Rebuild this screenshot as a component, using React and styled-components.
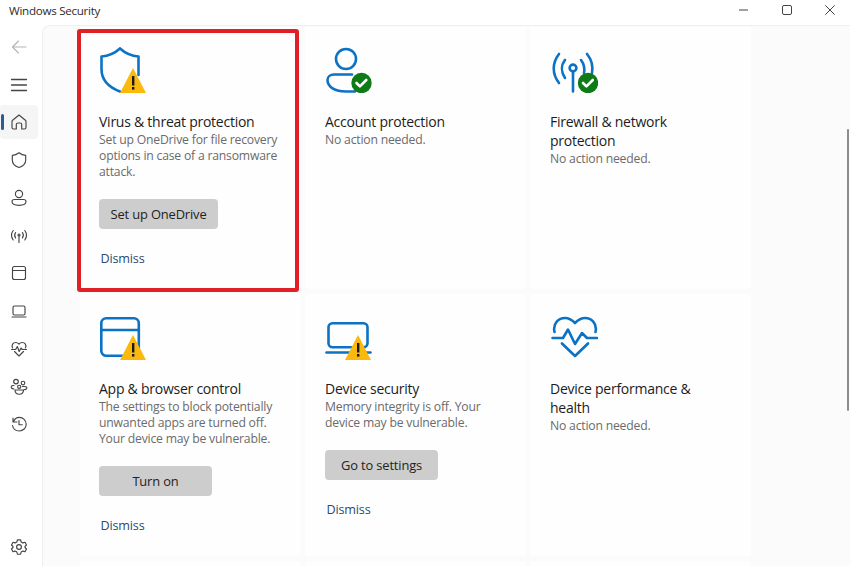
import React from "react";
import styled, { createGlobalStyle } from "styled-components";

const Global = createGlobalStyle`
  html, body { margin: 0; padding: 0; height: 100%; background: #fff; overflow: hidden; }
  #root { height: 100%; }
`;

const Window = styled.div`
  width: 850px; height: 566px; display: flex; flex-direction: column; position: relative; overflow: hidden;
  background: #fff; font-family: "Open Sans", "Noto Sans", sans-serif; color: #1c1c1c;
`;
const TitleBar = styled.header`
  height: 25px; flex: none; display: flex; align-items: center; padding-left: 9px; box-sizing: border-box;
`;
const AppName = styled.span`
  font-size: 11.6px; letter-spacing: -0.27px; color: #2b2b2b; flex: 1; margin-top: -5px;
`;
const Controls = styled.div`
  display: flex; gap: 33px; padding-right: 15px; margin-top: -6px;
`;
const ControlIcon = styled.svg`
  width: 10px; height: 10px; display: block; fill: none; stroke: #444; stroke-width: 1;
`;
const Body = styled.div`
  flex: 1; display: flex; min-height: 0;
`;
const Sidebar = styled.nav`
  width: 42px; flex: none; display: flex; flex-direction: column; padding-top: 4.85px; box-sizing: border-box;
`;
const NavItem = styled.div`
  width: 38px; height: 34px; flex: none; margin-bottom: ${p => (p.$bottom ? "2px" : "3.75px")}; position: relative; display: flex; align-items: center; justify-content: center;
  border-radius: 4px; background: ${p => (p.$active ? "#f5f5f5" : "transparent")};
  margin-top: ${p => (p.$bottom ? "auto" : "0")};
  &::before {
    content: ""; display: ${p => (p.$active ? "block" : "none")};
    position: absolute; left: 1px; top: 9px; width: 3px; height: 16px; border-radius: 2px; background: #2f5b8e;
  }
`;
const NavIcon = styled.svg`
  width: 20px; height: 20px; fill: none; stroke: ${p => p.$c || "#454545"}; stroke-width: 1.15; stroke-linecap: round; stroke-linejoin: round;
`;
const Main = styled.main`
  flex: 1; min-width: 0; background: #fbfbfb; border-top: 1px solid #efefef; border-left: 1px solid #efefef;
  border-top-left-radius: 8px; overflow: hidden; padding: 1px 0 0 37px; box-sizing: border-box;
`;
const Grid = styled.div`
  display: grid; grid-template-columns: repeat(3, 221px); grid-auto-rows: 262px; gap: 5px 4px;
`;
const Card = styled.section`
  background: #fefefe; padding: 18px 20px 0 ${p => (p.$first ? "19px" : "20px")}; box-sizing: border-box; position: relative; border-radius: 3px;
  ${p => p.$flagged && `
    &::after {
      content: ""; position: absolute; left: -3px; top: 2px; width: 222px; height: 263px;
      border: 4px solid #e01f26; border-radius: 3px; box-sizing: border-box; pointer-events: none;
    }
  `}
`;
const BigIcon = styled.svg`
  width: 48px; height: 48px; display: block; fill: none; stroke: #0c72c4; stroke-width: 2.6; stroke-linecap: round; stroke-linejoin: round;
`;
const Title = styled.h2`
  margin: 19px 0 0; font-size: 14px; font-weight: 400; line-height: 19px; letter-spacing: -0.25px; color: #1c1c1c;
`;
const Desc = styled.p`
  margin: 0; font-size: 12.2px; line-height: 16px; letter-spacing: -0.2px; color: #6b6b6b; padding-top: 1px;
`;
const Action = styled.button`
  display: block; width: ${p => p.$w}px; height: 30px; margin-top: 19px; padding: 0; border: 0; border-radius: 4px;
  background: #cdcdcd; font: inherit; font-size: 12.9px; letter-spacing: -0.14px; color: #222; text-align: center;
`;
const Dismiss = styled.a`
  display: block; margin: 21px 0 0 1.5px; font-size: 12.6px; line-height: 18px; letter-spacing: -0.17px; color: #2b4a70;
`;
const Scrollbar = styled.div`
  position: absolute; right: 1px; top: 129px; width: 2px; height: 282px; background: #8c8c8c; border-radius: 1px;
`;

const Warn = () => (
  <g stroke="none">
    <path d="M34 23 L47 48 H21 Z" fill="#fbb90e" />
    <rect x="33" y="31" width="2.4" height="9.5" fill="#1a1a1a" />
    <rect x="33" y="42" width="2.4" height="2.6" fill="#1a1a1a" />
  </g>
);
const Ok = ({ x, y }) => (
  <g>
    <circle cx={x} cy={y} r="10.2" fill="#0f7b17" stroke="none" />
    <path d={`M${x - 5} ${y} l3.4 3.4 l6.4 -6.4`} stroke="#fff" strokeWidth="2.6" />
  </g>
);

const VirusIcon = () => (
  <BigIcon viewBox="0 0 48 48">
    <path d="M21 3.5 C16 8 9 11 2.5 11.5 V24 C2.5 34 9 42 21 46.5 M21 3.5 C26 8 33 11 39.5 11.5 V30" />
    <Warn />
  </BigIcon>
);
const AccountIcon = () => (
  <BigIcon viewBox="0 0 48 48">
    <circle cx="21" cy="14" r="10" />
    <path d="M27 29.5 H9 C5 29.5 2.5 32 2.5 35 C2.5 42 10 46.5 21 46.5 H30" />
    <Ok x={36.5} y={38} />
  </BigIcon>
);
const WifiIcon = () => (
  <BigIcon viewBox="0 0 48 48">
    <circle cx="23" cy="23" r="3.4" />
    <path d="M23 27 V46.5 M9 9 C2 18 2 29 9 38 M15 15 C11 20 11 27 15 33 M37 9 C42 15 43 22 42 28 M31 15 C34 19 35 23 34 28" />
    <Ok x={38} y={38} />
  </BigIcon>
);
const AppIcon = () => (
  <BigIcon viewBox="0 0 48 48">
    <rect x="2.3" y="6.3" width="37.5" height="37.5" rx="5" />
    <path d="M2.3 18 H39.8" />
    <Warn />
  </BigIcon>
);
const DeviceIcon = () => (
  <BigIcon viewBox="0 0 48 48">
    <rect x="3.5" y="11.3" width="39" height="24" rx="4" />
    <path d="M1.5 40.5 H45.5" />
    <g transform="translate(-1 0)"><Warn /></g>
  </BigIcon>
);
const HeartIcon = () => (
  <BigIcon viewBox="0 0 48 48">
    <path d="M4.5 20 C2.5 11 9 6 15 6 C20 6 23 9 25 11 C27 9 30 6 35 6 C41 6 47.5 11 45.5 20 M2.5 26 H13 L18 17.5 L25 32 L32 21 L37 26 H47 M12 31.5 L25 44 L38 31.5" />
  </BigIcon>
);

const nav = [
  { c: "#b5b5b5", d: <path d="M17 10 H3.5 M9.5 4 L3.5 10 L9.5 16" /> },
  { d: <path d="M2.5 4.5 H17.5 M2.5 10 H17.5 M2.5 15.5 H17.5" strokeWidth="1.3" /> },
  { active: true, d: <path d="M10 3 L3.3 8.5 C3 9 3 9.4 3 10 V15.5 C3 16.5 3.7 17 4.5 17 H7.3 V12.5 C7.3 11.5 8 11 9 11 H11 C12 11 12.7 11.5 12.7 12.5 V17 H15.5 C16.3 17 17 16.5 17 15.5 V10 C17 9.4 17 9 16.7 8.5 Z" /> },
  { d: <path d="M10 2.8 C8 4.5 5.5 5.3 3.3 5.3 V10 C3.3 13.5 5.5 16 10 17.5 C14.5 16 16.7 13.5 16.7 10 V5.3 C14.5 5.3 12 4.5 10 2.8 Z" /> },
  { d: <><circle cx="10" cy="6" r="3.6" /><path d="M5.5 11.5 H14.5 C16 11.5 17 12.3 17 13.5 C17 16 14 17.3 10 17.3 C6 17.3 3 16 3 13.5 C3 12.3 4 11.5 5.5 11.5 Z" /></> },
  { d: <><circle cx="10" cy="9" r="1" /><path d="M10 10 V16.5 M4.2 4.5 C2 7.5 2 11 4.2 14 M6.6 6.5 C5.4 8.2 5.4 10.3 6.6 12 M15.8 4.5 C18 7.5 18 11 15.8 14 M13.4 6.5 C14.6 8.2 14.6 10.3 13.4 12" /></> },
  { d: <><rect x="3.5" y="3.5" width="13" height="13" rx="2" /><path d="M3.5 7.5 H16.5" /></> },
  { d: <><rect x="4" y="5" width="12" height="9" rx="1.5" /><path d="M3 16 H17" /></> },
  { d: <path d="M3.6 9 C2 6 4.2 3.5 6.7 3.5 C8 3.5 9.2 4.2 10 5.2 C10.8 4.2 12 3.5 13.3 3.5 C15.8 3.5 18 6 16.4 9 M2.5 10.5 H6.7 L8.3 7.5 L10.2 12.5 L12 9 L13.3 10.5 H17.5 M5.5 12.5 L10 17 L14.5 12.5" /> },
  { d: <><circle cx="7" cy="4.6" r="2.3" /><circle cx="14" cy="6" r="1.8" /><circle cx="10.2" cy="9.8" r="1.6" /><path d="M5 8.5 H4 C2.7 8.5 2 9.3 2.3 10.5 C2.6 11.5 3.5 12 5 12 M13.5 9.5 H16 C17.5 9.5 18 10.5 17.7 11.5 C17.4 12.3 16.5 12.7 15 12.7 M6 13 H14.5 C14.5 15.5 12.8 17.2 10.2 17.2 C7.7 17.2 6 15.5 6 13 Z" /></> },
  { d: <path d="M4 4 V8 H8 M4.2 8 C5.5 5 7.5 3.3 10.3 3.3 C14.1 3.3 17.2 6.4 17.2 10.2 C17.2 14 14.1 17 10.3 17 C7 17 4.2 14.7 3.5 11.5 M10 6.5 V10.7 H13.3" /> },
];
const Gear = (
  <><circle cx="10" cy="10" r="2.4" /><path d="M8.4 2.8 H11.6 L12.1 4.9 L13.9 5.9 L16 5.3 L17.5 8 L16 9.5 V10.5 L17.5 12 L16 14.7 L13.9 14.1 L12.1 15.1 L11.6 17.2 H8.4 L7.9 15.1 L6.1 14.1 L4 14.7 L2.5 12 L4 10.5 V9.5 L2.5 8 L4 5.3 L6.1 5.9 L7.9 4.9 Z" /></>
);

export default function App() {
  return (
    <Window>
      <Global />
      <TitleBar>
        <AppName>Windows Security</AppName>
        <Controls>
          <ControlIcon viewBox="0 0 10 10"><path d="M0 5 H9" /></ControlIcon>
          <ControlIcon viewBox="0 0 10 10"><rect x=".5" y=".5" width="9" height="9" rx="1.5" /></ControlIcon>
          <ControlIcon viewBox="0 0 10 10"><path d="M.3 .3 L9.7 9.7 M9.7 .3 L.3 9.7" /></ControlIcon>
        </Controls>
      </TitleBar>
      <Body>
        <Sidebar>
          {nav.map((n, i) => (
            <NavItem key={i} $active={n.active}><NavIcon viewBox="0 0 20 20" $c={n.c}>{n.d}</NavIcon></NavItem>
          ))}
          <NavItem $bottom><NavIcon viewBox="0 0 20 20">{Gear}</NavIcon></NavItem>
        </Sidebar>
        <Main>
          <Grid>
            <Card $flagged $first>
              <VirusIcon />
              <Title>Virus &amp; threat protection</Title>
              <Desc>Set up OneDrive for file recovery<br />options in case of a ransomware<br />attack.</Desc>
              <Action $w={119}>Set up OneDrive</Action>
              <Dismiss>Dismiss</Dismiss>
            </Card>
            <Card>
              <AccountIcon />
              <Title>Account protection</Title>
              <Desc>No action needed.</Desc>
            </Card>
            <Card>
              <WifiIcon />
              <Title>Firewall &amp; network<br />protection</Title>
              <Desc>No action needed.</Desc>
            </Card>
            <Card $first>
              <AppIcon />
              <Title>App &amp; browser control</Title>
              <Desc>The settings to block potentially<br />unwanted apps are turned off.<br />Your device may be vulnerable.</Desc>
              <Action $w={113}>Turn on</Action>
              <Dismiss>Dismiss</Dismiss>
            </Card>
            <Card>
              <DeviceIcon />
              <Title>Device security</Title>
              <Desc>Memory integrity is off. Your<br />device may be vulnerable.</Desc>
              <Action $w={113}>Go to settings</Action>
              <Dismiss>Dismiss</Dismiss>
            </Card>
            <Card>
              <HeartIcon />
              <Title>Device performance &amp;<br />health</Title>
              <Desc>No action needed.</Desc>
            </Card>
            <Card /><Card /><Card />
          </Grid>
        </Main>
      </Body>
      <Scrollbar />
    </Window>
  );
}
